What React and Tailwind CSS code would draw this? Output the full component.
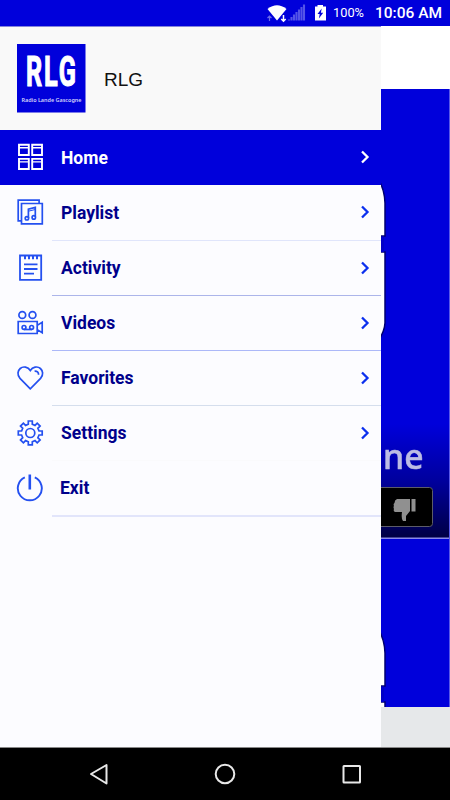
import React from 'react';

const line = { fill: 'none', stroke: 'currentColor', strokeWidth: 1.9 };

function GridIcon() {
    return (
        <svg className="size-7" viewBox="0 0 28 28" {...line}>
            <path d="M3 1.7h9.8v10.3H3zM16.2 1.7H26v10.3h-9.8zM3 15.9h9.8v10.1H3zM16.2 15.9H26v10.1h-9.8z" />
            <path d="M3 4.7h9.8M16.2 4.7H26M3 18.9h9.8M16.2 18.9H26" strokeWidth="1.4" />
        </svg>
    );
}

function PlaylistIcon() {
    return (
        <svg className="size-7" viewBox="0 0 28 28" {...line} strokeWidth="1.7">
            <path d="M5.5 5.5h20.8v20.4H5.5z" />
            <path d="M5.5 22.8H2.2V2.2h20.9v3.3" />
            <path d="M12.4 20v-8.9l6.9-1.7v9" />
            <path d="M12.4 13.2l6.9-1.7" strokeWidth="1" />
            <circle cx="10.9" cy="20.3" r="1.7" />
            <circle cx="17.8" cy="19.4" r="1.7" />
        </svg>
    );
}

function ActivityIcon() {
    return (
        <svg className="size-7" viewBox="0 0 28 28" {...line} strokeWidth="1.8">
            <path d="M4 1.5h21.2v24.3H4z" />
            <path d="M9 1.7v3.6M13 1.7v3.6M17 1.7v3.6M21 1.7v3.6" strokeWidth="2" />
            <path d="M8 10.3h13.5M8 15h13.5M8 19.7h10" />
        </svg>
    );
}

function VideosIcon() {
    return (
        <svg className="size-7" viewBox="0 0 28 28" {...line} strokeWidth="1.7">
            <circle cx="6.3" cy="6" r="3.4" />
            <circle cx="16.5" cy="6" r="3.4" />
            <path d="M2.2 12.5h19v12h-19zM21.2 16.4l5-3.2v10.6l-5-3.2" />
            <circle cx="8" cy="18.4" r="1.9" />
            <circle cx="15.6" cy="18.4" r="1.9" />
            <path d="M8 20.5h7.8" />
        </svg>
    );
}

function FavoritesIcon() {
    return (
        <svg className="size-7" viewBox="0 0 28 28" {...line} strokeWidth="1.7">
            <path d="M14.3 24.8 4 14.3C.8 10.900 1.800 6.600 4.200 4.500c3-2.700 7.800-1.600 10.100 2 2.300-3.600 7.100-4.700 10.100-2 2.400 2.100 3.400 6.400.2 9.800z" />
            <path d="M18.600 7.100c2.500-.2 4 1.300 4 3.600" />
        </svg>
    );
}

function SettingsIcon() {
    return (
        <svg className="size-7" viewBox="0 0 28 28" {...line} strokeWidth="1.7">
            <path d="M12.3 2h4v3.3l2.7 1.1 2.2-2.2 2.900 2.900-2.200 2.200 1.100 2.700h3.200v4h-3.200l-1.100 2.700 2.200 2.200-2.900 2.900-2.200-2.200-2.700 1.100v3.200h-4v-3.200l-2.700-1.100-2.200 2.200-2.900-2.900 2.200-2.200L5.600 16H2.300v-4h3.300l1.100-2.700-2.200-2.200 2.900-2.900 2.200 2.200 2.700-1.100z" />
            <circle cx="14.3" cy="14" r="4.5" />
        </svg>
    );
}

function ExitIcon() {
    return (
        <svg className="size-7" viewBox="0 0 28 28" {...line} strokeWidth="1.9">
            <path d="M8.8 3.400a12 12 0 1 0 10 0" />
            <path d="M13.800 .5v15" strokeWidth="2.600" />
        </svg>
    );
}

const items = [
    { label: 'Home', icon: GridIcon, row: 'h-[55px] bg-[#0000db] text-white', border: '' },
    { label: 'Playlist', icon: PlaylistIcon, row: 'h-14', border: 'border-b border-[#e0e5fb]' },
    { label: 'Activity', icon: ActivityIcon, row: 'h-[55px]', border: 'border-b border-[#acb5ea]' },
    { label: 'Videos', icon: VideosIcon, row: 'h-[55px]', border: 'border-b border-[#acb8f8]' },
    { label: 'Favorites', icon: FavoritesIcon, row: 'h-[55px]', border: 'border-b border-[#d5deed]' },
    { label: 'Settings', icon: SettingsIcon, row: 'h-[55px]', border: 'border-b border-[#fafafc]' },
    { label: 'Exit', icon: ExitIcon, row: 'h-14', border: 'border-b-2 border-[#e2e5fb]', last: true },
];

function StatusBar() {
    return (
        <header className="flex h-[26px] shrink-0 items-center justify-end bg-[#0000db] pr-[9px] text-white">
            <svg className="h-[26px] w-[66px]" viewBox="0 0 66 26">
                <path d="M2.5 9Q12 1.5 21.5 9L12 20.5z" fill="#fff" />
                <path d="M4.5 21v-5m-2 2 2-2 2 2" fill="none" stroke="#6969ea" strokeWidth="1.2" />
                <path d="M18.5 15v6m-2.2-2 2.2 2.2 2.2-2.2" fill="none" stroke="#0000db" strokeWidth="3.5" />
                <path d="M18.5 15v6m-2.2-2 2.2 2.2 2.2-2.2" fill="none" stroke="#fff" strokeWidth="1.5" />
                <path d="M24 20.5v-1M26.5 20.5V17M29 20.5v-6M31.5 20.5v-8.5M34 20.5V9.500M36.500 20.500V7M39 20.500V4.500" stroke="#5454e8" strokeWidth="2.1" />
                <path d="M52.500 5v1.500H50v14h11v-14h-3V5z" fill="#fff" />
                <path d="m56.700 8.500-4.200 5.500h2.200l-.8 4.500 4.300-5.700h-2.300z" fill="#0000db" />
            </svg>
            <span className="mt-px ml-0.5 w-[42px] text-[12.8px] leading-none">100%</span>
            <span className="mt-0.5 w-[66px] text-right text-[15.5px] leading-none font-medium whitespace-nowrap">10:06 AM</span>
        </header>
    );
}

function Drawer() {
    return (
        <aside className="w-[381px] shrink-0 bg-[#fcfcff]">
            <div className="flex h-[104px] items-center border-t border-[#8585dc] bg-[#f9f9f9] pl-[17px]">
                <svg className="h-[69px] w-[69px] overflow-visible" viewBox="0 0 69 69">
                    <rect width="68.5" height="68.5" fill="#0000db" />
                    <text transform="translate(9 42.300) scale(.6 1)" fill="#fff" stroke="#fff" strokeWidth="1.200" fontFamily="Roboto, sans-serif" fontWeight="700" fontSize="42" letterSpacing="3.200">RLG</text>
                    <text x="4.5" y="58" fontSize="6" fill="#d4d4fa" fontFamily="Noto Sans, sans-serif" fontWeight="600" textLength="60" lengthAdjust="spacingAndGlyphs">Radio Lande Gascogne</text>
                </svg>
                <h1 className="mt-1 ml-[18px] font-['Liberation_Sans',sans-serif] text-[19px] text-[#111]">RLG</h1>
            </div>
            <nav>
                {items.map(({ label, icon: Icon, row, border, last }) => (
                    <a key={label} className={`flex pl-4 ${label === 'Home' ? '' : 'text-[#2450f0]'} ${row}`}>
                        <span className="flex w-9 shrink-0 items-center pb-0.5"><Icon /></span>
                        <span className={`flex flex-1 items-center justify-between pr-[10px] ${last ? 'pl-2' : 'pl-[9px]'} ${border}`}>
                            <span className={`pt-px text-[17.5px] font-bold ${label === 'Home' ? 'text-white' : 'text-[#00008b]'}`}>{label}</span>
                            {!last && (
                                <svg className={`mb-px h-[14px] w-[11px] ${label === 'Home' ? 'text-white' : 'text-[#0c30ee]'}`} viewBox="0 0 11 14" fill="none" stroke="currentColor" strokeWidth="2.3">
                                    <path d="m2 1.500 5.500 5.500L2 12.500" />
                                </svg>
                            )}
                        </span>
                    </a>
                ))}
            </nav>
        </aside>
    );
}

// Slice of the station cover left visible beside the drawer
function Cover({ first }) {
    return (
        <svg className="block w-[69px]" height={first ? 450 : 168} viewBox={`0 0 69 ${first ? 450 : 168}`}>
            <defs>
                <linearGradient id="shade" x1="0" y1="0" x2="0" y2="1">
                    <stop offset="0" stopColor="#000028" stopOpacity="0" />
                    <stop offset=".5" stopColor="#000028" stopOpacity=".35" />
                    <stop offset="1" stopColor="#000028" stopOpacity=".85" />
                </linearGradient>
                <filter id="soft"><feGaussianBlur stdDeviation=".7" /></filter>
            </defs>
            <rect width="69" height="450" fill="#0000db" />
            <g filter="url(#soft)">
                <path d="M-4 88Q3.500 99 4 114V147H-4zM-4 163H4V234Q3.500 243-4 254z" fill="#fff" stroke="#000070" strokeWidth="1.500" />
                <path d="M-4 147.500H3V163H-4z" fill="#0000c8" />
            </g>
            {first && (
                <>
                    <rect y="335" width="69" height="115" fill="url(#shade)" />
                    <text x="2" y="380" fontSize="34" fill="#bcbce4" stroke="#bcbce4" strokeWidth=".5" fontFamily="Noto Sans, sans-serif" fontWeight="500" textLength="40.500" lengthAdjust="spacingAndGlyphs" filter="url(#soft)">ne</text>
                    <rect x="-8" y="398.500" width="59.500" height="39" rx="3" fill="#000" stroke="#5c5c68" />
                    <path d="M16 410h13v12l-4 5v5h-3q-2-2-1-9h-7q-2-1-1-3-1-2 0-3-1-2 .5-3 0-3 2.500-4zM30.500 410h4v12.500h-4z" fill="#909090" />
                    <path d="M0 449.500h69" stroke="#8a8ae8" strokeWidth="2" />
                </>
            )}
            <path d="M68.500 0v450" stroke="#5858e8" />
        </svg>
    );
}

export default function App() {
    return (
        <div className="flex h-[800px] w-[450px] flex-col overflow-hidden bg-white font-['Roboto',sans-serif]">
            <StatusBar />
            <main className="flex h-[722px] shrink-0 border-b border-[#888]">
                <Drawer />
                <div className="flex w-[69px] flex-col bg-[#e6e8ea]">
                    <div className="h-[63px] bg-white" />
                    <Cover first />
                    <Cover />
                </div>
            </main>
            <footer className="flex h-[52px] shrink-0 bg-black">
                <svg className="h-[52px] w-[450px]" viewBox="0 0 450 52" fill="none" stroke="#e8e8e8" strokeWidth="2">
                    <path d="M106.5 17v18.5L91 26z" strokeLinejoin="round" />
                    <circle cx="225" cy="26" r="9.3" />
                    <rect x="343.5" y="18" width="16.5" height="16.5" rx=".5" />
                </svg>
            </footer>
        </div>
    );
}
